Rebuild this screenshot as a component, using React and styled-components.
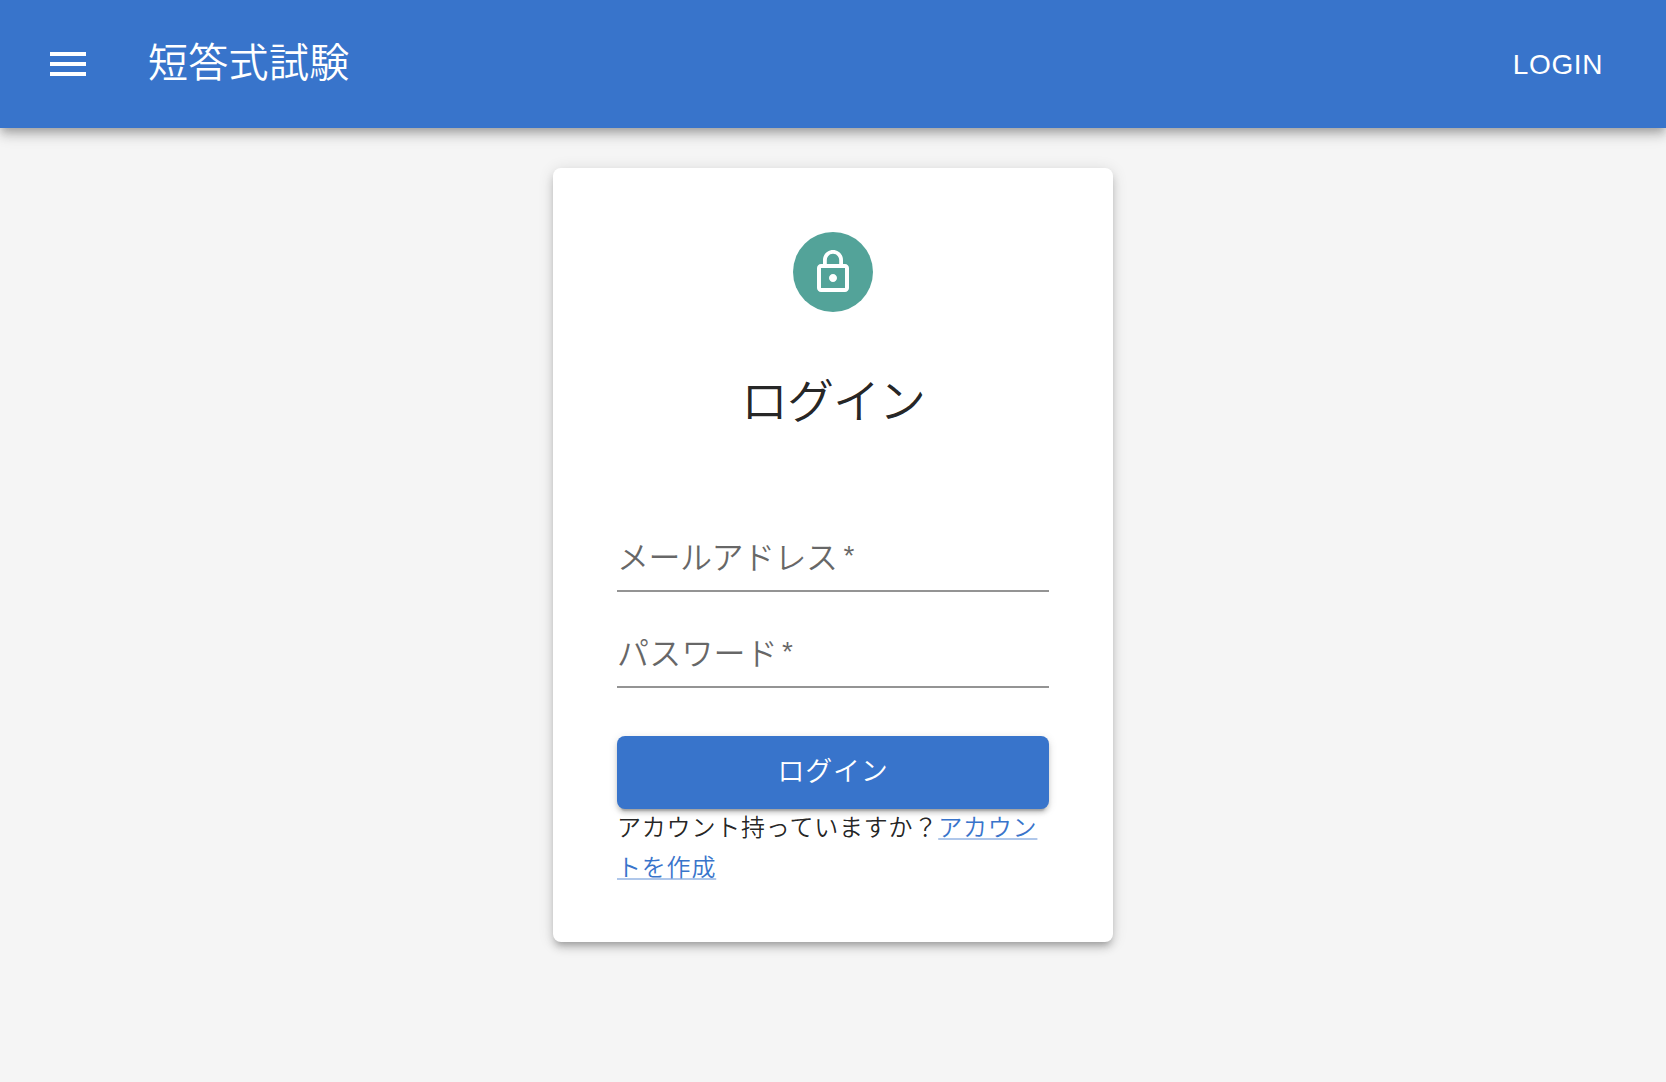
import React from "react";
import styled, { createGlobalStyle } from "styled-components";

const PRIMARY = "#3874cb";

const GlobalStyle = createGlobalStyle`
  *, *::before, *::after { box-sizing: border-box; }
  body {
    margin: 0;
    background: #f5f5f5;
    color: rgba(0, 0, 0, 0.87);
    font-family: "Noto Sans CJK JP", sans-serif;
    font-weight: 350;
  }
`;

const Page = styled.div`
  min-height: 1082px;
  display: flex;
  flex-direction: column;
  align-items: center;
`;

const AppBar = styled.header`
  width: 100%;
  height: 128px;
  padding: 0 48px;
  display: flex;
  align-items: center;
  color: #fff;
  background: ${PRIMARY};
  box-shadow: 0 4px 8px -2px rgba(0, 0, 0, 0.2), 0 8px 10px 0 rgba(0, 0, 0, 0.14),
    0 2px 20px 0 rgba(0, 0, 0, 0.12);
`;

const IconButton = styled.button`
  display: flex;
  margin: 0 32px 0 -28px;
  padding: 24px;
  border: 0;
  color: inherit;
  background: none;
`;

const Icon = styled.svg`
  width: 48px;
  height: 48px;
  fill: currentColor;
`;

const Title = styled.h1`
  flex: 1;
  margin: 0;
  padding-bottom: 8px;
  font-size: 40px;
  font-weight: 350;
  line-height: 64px;
  letter-spacing: 0.3px;
`;

const NavButton = styled.button`
  padding: 13px 15px 12px 16px;
  border: 0;
  color: inherit;
  background: none;
  font-family: "Liberation Sans", sans-serif;
  font-size: 28px;
  font-weight: 400;
  line-height: 49px;
  letter-spacing: 0.6px;
`;

const Card = styled.main`
  width: 560px;
  height: 774px;
  margin-top: 40px;
  padding: 64px;
  display: flex;
  flex-direction: column;
  border-radius: 8px;
  background: #fff;
  box-shadow: 0 6px 6px -4px rgba(0, 0, 0, 0.2), 0 6px 8px 0 rgba(0, 0, 0, 0.14),
    0 2px 16px 0 rgba(0, 0, 0, 0.12);
`;

const Avatar = styled.div`
  width: 80px;
  height: 80px;
  flex: none;
  align-self: center;
  display: flex;
  align-items: center;
  justify-content: center;
  border-radius: 50%;
  color: #fff;
  background: #53a399;
`;

const Heading = styled.h2`
  margin: 54px 0 66px;
  font-size: 47px;
  font-weight: 350;
  line-height: 64px;
  letter-spacing: -1px;
  text-align: center;
`;

const Field = styled.label`
  height: 96px;
  flex: none;
  padding-top: 31px;
  display: flex;
  gap: ${(p) => p.$gap}px;
  border-bottom: 2px solid #949494;
  color: rgba(0, 0, 0, 0.6);
  font-size: 32px;
  line-height: 56px;
  letter-spacing: ${(p) => p.$spacing}px;
`;

const Asterisk = styled.span`
  font-family: "Liberation Sans", sans-serif;
  font-size: 28px;
  font-weight: 400;
  line-height: 57px;
`;

const Submit = styled.button`
  height: 73px;
  margin-top: 48px;
  padding: 0 0 6px;
  flex: none;
  border: 0;
  border-radius: 8px;
  color: #fff;
  background: ${PRIMARY};
  font-family: inherit;
  font-size: 27px;
  font-weight: 350;
  letter-spacing: 0.8px;
  box-shadow: 0 6px 2px -4px rgba(0, 0, 0, 0.2), 0 4px 4px 0 rgba(0, 0, 0, 0.14),
    0 2px 10px 0 rgba(0, 0, 0, 0.12);
`;

const Caption = styled.p`
  margin: -3px 0 0;
  font-size: 24px;
  line-height: 40px;
  letter-spacing: 0.8px;
`;

const Link = styled.a`
  color: ${PRIMARY};
  text-decoration: underline;
  text-decoration-color: rgba(56, 116, 203, 0.4);
  text-decoration-thickness: 2px;
  text-underline-offset: 2px;
  text-decoration-skip-ink: none;
`;

export default function App() {
  return (
    <Page>
      <GlobalStyle />
      <AppBar>
        <IconButton aria-label="menu">
          <Icon viewBox="0 0 24 24">
            <path d="M3 18h18v-2H3v2zm0-5h18v-2H3v2zm0-7v2h18V6H3z" />
          </Icon>
        </IconButton>
        <Title>短答式試験</Title>
        <NavButton>LOGIN</NavButton>
      </AppBar>
      <Card>
        <Avatar>
          <Icon viewBox="0 0 24 24">
            <path d="M12 17c1.1 0 2-.9 2-2s-.9-2-2-2-2 .9-2 2 .9 2 2 2zm6-9h-1V6c0-2.76-2.24-5-5-5S7 3.24 7 6v2H6c-1.1 0-2 .9-2 2v10c0 1.1.9 2 2 2h12c1.1 0 2-.9 2-2V10c0-1.1-.9-2-2-2zM8.900 6c0-1.710 1.390-3.100 3.100-3.100s3.100 1.390 3.100 3.100v2H8.900V6zM18 20H6V10h12v10z" />
          </Icon>
        </Avatar>
        <Heading>ログイン</Heading>
        <Field $spacing={-0.5} $gap={6}>
          メールアドレス<Asterisk>*</Asterisk>
        </Field>
        <Field $spacing={0.2} $gap={4}>
          パスワード<Asterisk>*</Asterisk>
        </Field>
        <Submit>ログイン</Submit>
        <Caption>
          アカウント持っていますか？<Link>アカウントを作成</Link>
        </Caption>
      </Card>
    </Page>
  );
}
